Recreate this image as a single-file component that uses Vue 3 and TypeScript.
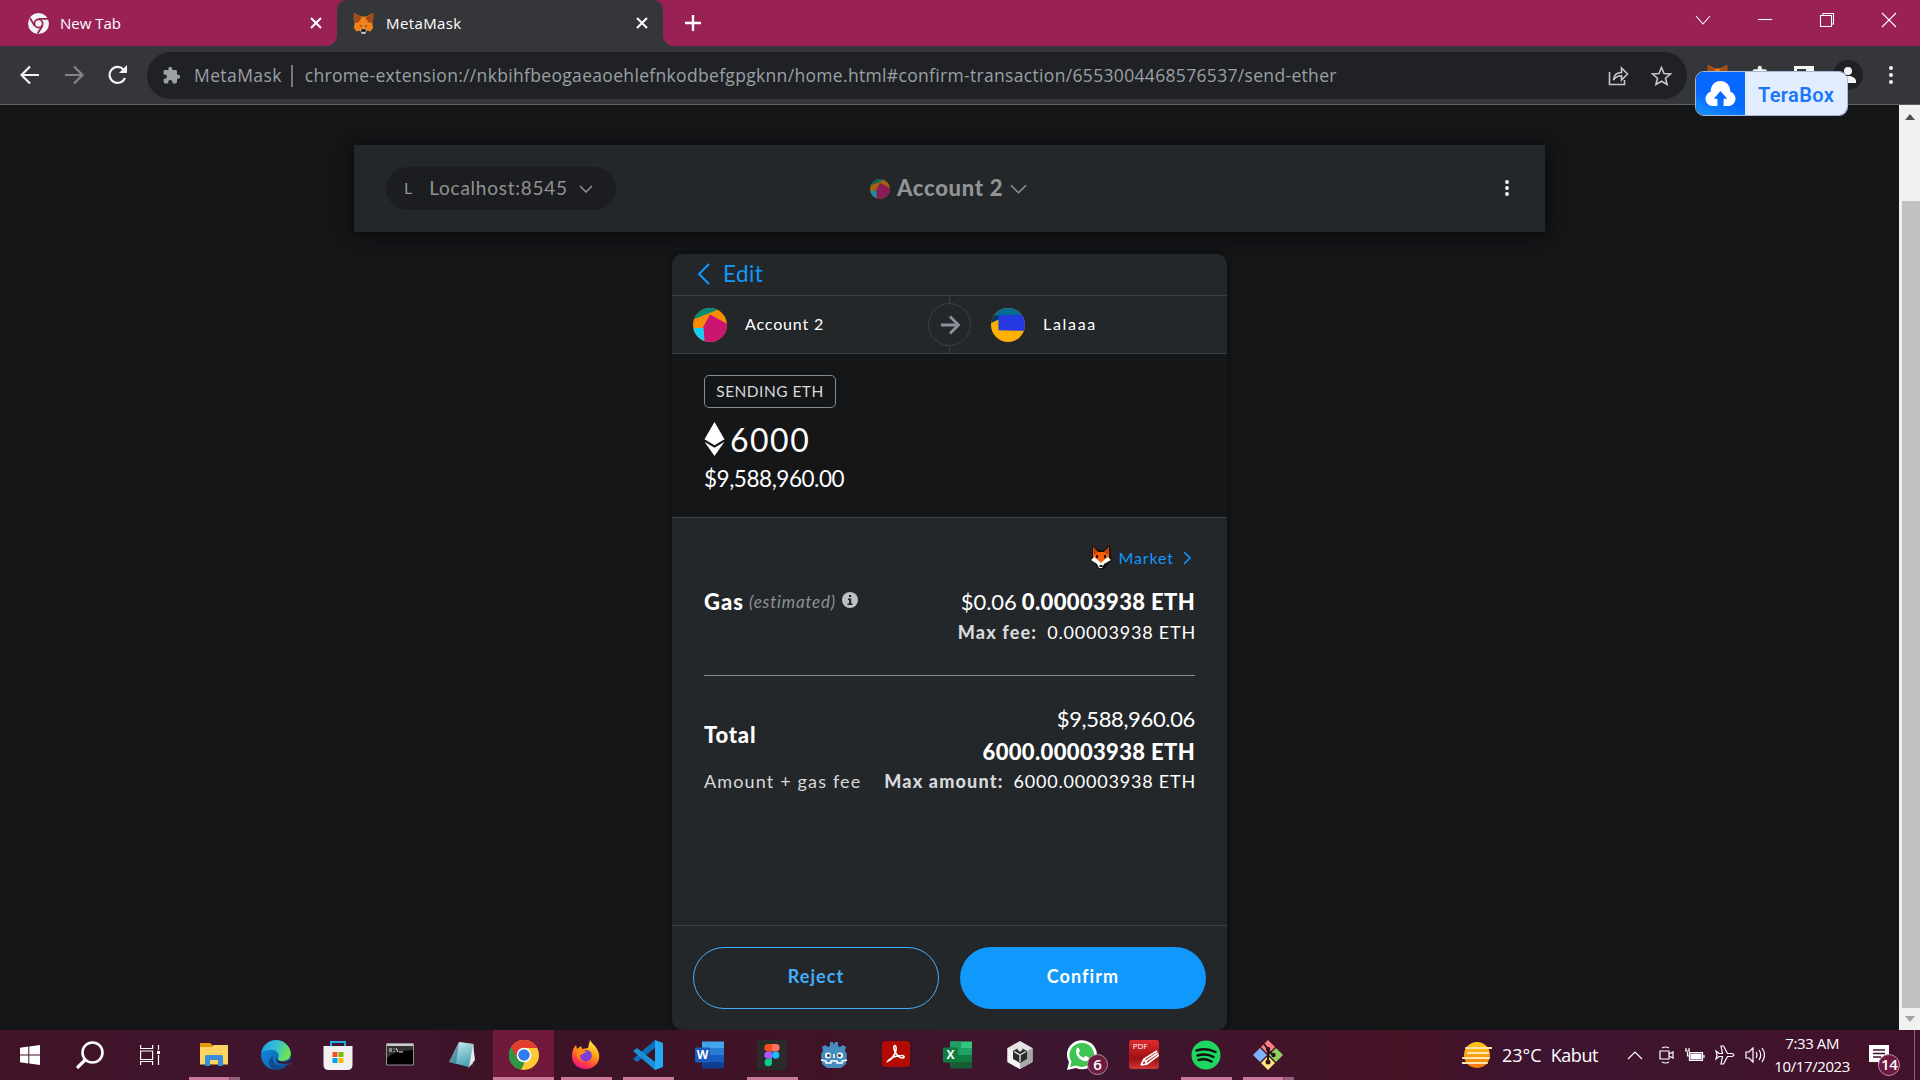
<script setup lang="ts">
interface TaskItem { name: string; state?: 'open' | 'multi' | 'active'; badge?: string }

const tasks: TaskItem[] = [
  { name: 'explorer', state: 'multi' }, { name: 'edge' }, { name: 'store' }, { name: 'cmd' }, { name: 'notepad' },
  { name: 'chrome', state: 'active' }, { name: 'firefox', state: 'open' }, { name: 'vscode', state: 'open' },
  { name: 'word' }, { name: 'figma', state: 'open' }, { name: 'godot' }, { name: 'acrobat' }, { name: 'excel' },
  { name: 'unity' }, { name: 'whatsapp', badge: '6' }, { name: 'pdf' }, { name: 'spotify', state: 'open' },
  { name: 'git', state: 'multi' },
]
</script>

<template>
  <div class="screen">
    <svg class="defs" width="0" height="0" aria-hidden="true">
      <defs>
        <symbol id="fox" viewBox="0 0 24 24">
          <path d="M1 0l8 4h6l8-4v7l-1 4 1 6-3 4-5-1-2 3h-2l-2-3-5 1-3-4 1-6-1-4z" fill="#ee7f1d" />
          <path d="M1 0l9 5-4 6-4 0L.500 6zM23 0l-9 5 4 6 4 0L23.500 6z" fill="#a04c18" />
          <path d="M2 12l4-1h12l4 1-1 3H3z" fill="#f6851b" />
          <path d="M7 13.500l3 1v1.700zM17 13.500l-3 1v1.700z" fill="#33302e" />
          <path d="M8 19l2-1h4l2 1-2 5h-4z" fill="#cdbdb0" /><path d="M9.500 18.500h5v3h-5z" fill="#161616" />
        </symbol>
        <symbol id="jazz" viewBox="0 0 32 32">
          <g clip-path="url(#disc)">
            <path d="M0 0h32v32H0z" fill="#f58c03" /><path d="M0 0h24L22 2 2 10 0 9z" fill="#018e77" />
            <path d="M16 6l18 10v18H11L9 19z" fill="#cb1571" /><path d="M0 19l10-.5L11 33H0z" fill="#18cdf2" />
          </g>
        </symbol>
        <symbol id="puzzle" viewBox="0 0 24 24"><path d="M20.500 11H19V7c0-1.100-.9-2-2-2h-4V3.500a2.500 2.500 0 0 0-5 0V5H4c-1.100 0-2 .9-2 2v3.800h1.500a2.700 2.700 0 0 1 0 5.400H2V20c0 1.100.9 2 2 2h3.800v-1.500a2.700 2.700 0 0 1 5.400 0V22H17c1.100 0 2-.9 2-2v-4h1.500a2.500 2.500 0 0 0 0-5z" /></symbol>
        <clipPath id="disc"><circle cx="16" cy="16" r="16" /></clipPath>
        <clipPath id="mid"><circle cx="15" cy="15" r="15" /></clipPath>
        <linearGradient id="edgeA" x1="0" y1="0" x2="1" y2=".3"><stop stop-color="#1d9be3" /><stop offset=".55" stop-color="#35c1d6" /><stop offset="1" stop-color="#6be552" /></linearGradient>
        <linearGradient id="edgeB" x1="0" y1="0" x2="1" y2="1"><stop stop-color="#0f8fe0" /><stop offset="1" stop-color="#0c59a4" /></linearGradient>
        <linearGradient id="fire" x1=".8" y1="0" x2=".3" y2="1"><stop stop-color="#fff44f" /><stop offset=".45" stop-color="#ff980e" /><stop offset=".8" stop-color="#ff3750" /><stop offset="1" stop-color="#e31587" /></linearGradient>
        <linearGradient id="note" x1="0" y1="0" x2=".5" y2="1"><stop stop-color="#dff3f6" /><stop offset="1" stop-color="#4aa6b8" /></linearGradient>
        <linearGradient id="red" x1="0" y1="0" x2="0" y2="1"><stop stop-color="#e02a2f" /><stop offset=".65" stop-color="#9c0f10" /><stop offset="1" stop-color="#d23a36" /></linearGradient>
        <linearGradient id="sun" x1="0" y1="0" x2="0" y2="1"><stop stop-color="#ffcb1b" /><stop offset="1" stop-color="#f4780e" /></linearGradient>
      </defs>
    </svg>

    <header class="tabs">
      <div class="tab first">
        <svg class="tabicon" viewBox="0 0 24 24"><circle cx="12" cy="12" r="12" fill="#f1f3f4" /><circle cx="12" cy="12" r="4.700" fill="none" stroke="#992153" stroke-width="2" /><path d="M12 6.800h11M7.500 14.500L2.200 5.700M16.500 14.500L11 23.500" stroke="#992153" stroke-width="2" /></svg>
        <span class="t tabname">New Tab</span>
        <svg class="x" viewBox="0 0 12 12"><path d="M1 1l10 10M11 1L1 11" /></svg>
      </div>
      <div class="tab current">
        <svg class="tabicon"><use href="#fox" /></svg>
        <span class="t tabname wide">MetaMask</span>
        <svg class="x" viewBox="0 0 12 12"><path d="M1 1l10 10M11 1L1 11" /></svg>
      </div>
      <svg class="plus" viewBox="0 0 18 18"><path d="M9 1v16M1 9h16" /></svg>
      <div class="winbtns">
        <svg viewBox="0 0 16 16"><path d="M1 4l7 8 7-8" /></svg>
        <svg viewBox="0 0 16 16"><path d="M1 7.500h14" /></svg>
        <svg viewBox="0 0 16 16"><path d="M1.500 3.500h11v11h-11zM4 3.500v-2h10.500V12H13" /></svg>
        <svg viewBox="0 0 16 16"><path d="M1 1l14 14M15 1L1 15" /></svg>
      </div>
    </header>

    <div class="toolbar">
      <svg class="nav" viewBox="0 0 20 20"><path d="M19 10H2M10 1.500L1.500 10l8.500 8.500" /></svg>
      <svg class="nav dim" viewBox="0 0 20 20"><path d="M1 10h17M10 1.500l8.500 8.500-8.500 8.500" /></svg>
      <svg class="nav" viewBox="0 0 20 20"><path d="M17 13a8 8 0 1 1-1.500-8.500L18 7" /><path d="M19 0v8h-8z" fill="#f1f3f4" stroke="none" /></svg>
      <div class="omni">
        <svg class="ext"><use href="#puzzle" /></svg>
        <span class="t site">MetaMask</span><i class="bar"></i>
        <span class="t url">chrome-extension://nkbihfbeogaeaoehlefnkodbefgpgknn/home.html#confirm-transaction/6553004468576537/send-ether</span>
        <svg class="share" viewBox="0 0 20 20"><path d="M1 6v12.500h15V14M5 14c.4-5 3-7.500 8-7.500V2l6 6-6 6V9.800c-4 0-6 1-8 4.200z" /></svg>
        <svg class="star" viewBox="0 0 20 20"><path d="M10 1.500l2.500 6 6.500.5-5 4.200 1.600 6.300L10 15.200l-5.600 3.300L6 12.200 1 8l6.500-.5z" /></svg>
      </div>
      <div class="exts">
        <svg class="e-fox"><use href="#fox" /></svg>
        <svg class="e-puz"><use href="#puzzle" /></svg>
        <svg class="e-side" viewBox="0 0 20 18"><path d="M1.500 1.500h17v15h-17z" fill="none" stroke="#f1f3f4" stroke-width="3" /><path d="M12 2h7v14h-7z" /></svg>
        <svg class="e-user" viewBox="0 0 30 30"><circle cx="15" cy="15" r="15" fill="#202124" /><circle cx="15" cy="11" r="4" /><path d="M7 23v-2c0-3 4-5 8-5s8 2 8 5v2z" /></svg>
        <svg class="e-dots" viewBox="0 0 4 18"><circle cx="2" cy="2" r="2" /><circle cx="2" cy="9" r="2" /><circle cx="2" cy="16" r="2" /></svg>
      </div>
    </div>

    <div class="tera">
      <div class="cloud"><svg viewBox="0 0 30 24"><path d="M7 24a7 7 0 0 1-1.500-13.700C5.500 4 9.500 0 15 0s9.500 4 9.500 10.300A7 7 0 0 1 23 24h-5v-7h3.500L15 9.500 8.500 17H12v7z" fill="#fff" /></svg></div>
      <div class="teraname"><span class="t">TeraBox</span></div>
    </div>

    <main class="page">
      <div class="view">
        <div class="appbar">
          <div class="network"><span class="t netL">L</span><span class="t netname">Localhost:8545</span><svg viewBox="0 0 14 8"><path d="M1 1l6 6 6-6" /></svg></div>
          <div class="account"><svg class="jz"><use href="#jazz" /></svg><span class="t accname">Account 2</span><svg class="chev" viewBox="0 0 18 10"><path d="M1 1l8 8 8-8" /></svg></div>
          <svg class="dots" viewBox="0 0 4 16"><circle cx="2" cy="2" r="1.900" /><circle cx="2" cy="8" r="1.900" /><circle cx="2" cy="14" r="1.900" /></svg>
        </div>

        <section class="card">
          <div class="edit"><svg viewBox="0 0 13 22"><path d="M12 1L2 11l10 10" /></svg><span class="t">Edit</span></div>
          <div class="parties">
            <div class="party"><svg><use href="#jazz" /></svg><span class="t p1">Account 2</span></div>
            <div class="arrow"><svg viewBox="0 0 20 20"><path d="M1 10h17M10 1.500l8.500 8.500-8.500 8.500" /></svg></div>
            <div class="party to"><svg viewBox="0 0 32 32"><g clip-path="url(#disc)"><path d="M0 0h32v32H0z" fill="#fcb002" /><path d="M0 0h32v8H0z" fill="#016b92" /><path d="M0 7h9v3L0 14z" fill="#06395c" /><path d="M7 7l25-.5v15L7 21z" fill="#2437e1" /></g></svg><span class="t p2">Lalaaa</span></div>
          </div>
          <div class="amount">
            <div class="chip"><span class="t">SENDING ETH</span></div>
            <div class="eth"><svg viewBox="0 0 20 34"><path d="M10 0l10 17.300-10 6-10-6zM0 19.800l10 6 10-6L10 34z" /></svg><span class="t ethval">6000</span></div>
            <div class="fiat"><span class="t fiatval">$9,588,960.00</span></div>
          </div>
          <div class="details">
            <div class="market">
              <svg class="mfox" viewBox="0 0 24 26"><path d="M3 1l6 5h6l6-5 1 11 2 4-5 4-4 5h-5l-4-5-5-4 2-4z" fill="#14110f" /><path d="M4 3l5 5h6l5-5v10l-8 8-8-8z" fill="#f7600b" /><path d="M4 3l5 5-4 3zM20 3l-5 5 4 3z" fill="#c93d07" /><path d="M2 16l3-3 5 4 2 2 2-2 5-4 3 3-7 4-2 4h-3l-2-4z" fill="#fff" /><path d="M8 11v3M16 11v3" stroke="#111" stroke-width="2" /><path d="M10.500 21h3v2h-3z" fill="#111" /></svg>
              <span class="t mk">Market</span><svg class="mchev" viewBox="0 0 9 14"><path d="M1 1l6 6-6 6" /></svg>
            </div>
            <div class="line gas">
              <b class="t gasname">Gas</b><i class="t est">(estimated)</i>
              <svg class="info" viewBox="0 0 16 16"><circle cx="8" cy="8" r="8" /><path d="M7 3h2.200v2H7zM6 6.500h3.200v5H10.500V13h-5v-1.500H7V8H6z" fill="#24272a" /></svg>
              <span class="t big usd">$0.06</span><b class="t big heavy">0.00003938 ETH</b>
            </div>
            <div class="line max"><b class="t mlabel">Max fee:</b><span class="t mval">0.00003938 ETH</span></div>
            <div class="rule"></div>
            <div class="total">
              <b class="t totalname">Total</b>
              <div class="sums"><span class="t big sum">$9,588,960.06</span><b class="t big heavy">6000.00003938 ETH</b></div>
            </div>
            <div class="line max last"><span class="t agf">Amount + gas fee</span><b class="t mlabel">Max amount:</b><span class="t mval">6000.00003938 ETH</span></div>
          </div>
          <div class="actions"><button class="reject">Reject</button><button class="confirm">Confirm</button></div>
        </section>
      </div>
      <div class="scroll"><i class="up"></i><i class="thumb"></i><i class="down"></i></div>
    </main>

    <footer class="taskbar">
      <div class="sys"><svg viewBox="0 0 20 20" width="20" height="20"><path d="M0 2.700l8.300-1.200v8H0zM9.300 1.400L20 0v9.500H9.300zM0 10.500h8.300v8L0 17.300zM9.300 10.500H20V20L9.300 18.600z" fill="#fff" /></svg></div>
      <div class="sys"><svg viewBox="0 0 28 28" width="28" height="28"><circle cx="16.500" cy="11.500" r="10" fill="none" stroke="#fff" stroke-width="2.600" /><path d="M9 19l-8 8" stroke="#fff" stroke-width="3.200" /></svg></div>
      <div class="sys views"><svg viewBox="0 0 20 20" width="20" height="20" fill="none" stroke="#fff" stroke-width="1.200"><path d="M.6 0v3.500h12V0M.6 6h12v8.500H.6zM.6 20v-3.500h12V20M18.500 0v5M18.500 10v10" /><path d="M17 6h3v3h-3z" fill="#fff" stroke="none" /></svg></div>
      <div v-for="item in tasks" :key="item.name" class="task" :class="item.state">
        <svg viewBox="0 0 30 30" width="30" height="30">
          <template v-if="item.name === 'explorer'"><path d="M1 3h10l3 2.500V8H1z" fill="#e09b06" /><path d="M1 7h12l2-2h14v19.500H1z" fill="#fdd462" /><path d="M6 26v-9.500q0-1.500 1.500-1.500h15q1.500 0 1.500 1.500V26h-5v-6h-8v6z" fill="#3a8ddb" /></template>
          <template v-else-if="item.name === 'edge'"><g clip-path="url(#mid)"><path d="M0 0h30v30H0z" fill="url(#edgeB)" /><path d="M0 14C1 5 8 0 15 0c9 0 15 6 15 13 0 5-4 8-9 8-4 0-5-1-4-3 3-5-3-9-8-8-4 0-8 1-9 4z" fill="url(#edgeA)" /><path d="M12 16c-2 8 6 12 15 8-3 5-9 6-13 6-6-2-9-9-2-14z" fill="#114a8b" /></g><path d="M17 17c-2 3 2 5 6 5l8-2v4l-3 .5c-4 .5-7 1-10-1-4-2-4-6-1-6.500z" fill="#0d57a0" /><path d="M17 18c-1 3 4 4.500 8 3.500l6-2-2 4-3 0c-6 1-12-1-9-5.500z" fill="#41142d" /></template>
          <template v-else-if="item.name === 'store'"><path d="M8 6V2h14v4" fill="none" stroke="#25a9e8" stroke-width="2" /><path d="M.5 6h29v19q0 5-5 5h-19q-5 0-5-5z" fill="#f1f1f1" /><path d="M9.500 12h5v5h-5z" fill="#f25022" /><path d="M15.500 12h5v5h-5z" fill="#7fba00" /><path d="M9.500 18h5v5h-5z" fill="#00a4ef" /><path d="M15.500 18h5v5h-5z" fill="#ffb900" /></template>
          <template v-else-if="item.name === 'cmd'"><path d="M1.500 3.500h27v21.500h-27z" fill="#000" stroke="#8e9296" /><path d="M2 4h26v2H2z" fill="#c9cdd1" /><path d="M2 6h26v4C15 11 7 13 2 18z" fill="#333" /><path d="M4 9h3M4 11h3M9 8.500v1M9 11v1M11 8l2 4M14 12h4" stroke="#ddd" /></template>
          <template v-else-if="item.name === 'notepad'"><path d="M13 2l14 2-1 20-5 4z" fill="#9a8c6c" /><path d="M12 2l14 2-4 23-20-5z" fill="url(#note)" /><path d="M26 4l2 16-6 7z" fill="#e3edef" /><path d="M2 22L12 3 9 24z" fill="#2d7587" opacity=".6" /></template>
          <template v-else-if="item.name === 'chrome'"><g clip-path="url(#mid)"><path d="M0 0h30v30H0z" fill="#fcc934" /><path d="M0 0l9 19 6 3-3 8H0z" fill="#2c9644" /><path d="M8.500 19l7 4-4 7H0z" fill="#2c9644" /><path d="M0 8L6 0h20l4 8H15l-7 11L2 7z" fill="#e33b2e" /><path d="M2 7l6.500 12L13 22l-3 8H0V8z" fill="#2c9644" /></g><circle cx="15" cy="15" r="7.300" fill="#fff" /><circle cx="15" cy="15" r="5.800" fill="#2f7cf0" /></template>
          <template v-else-if="item.name === 'firefox'"><path d="M19 0c2 4 5 5 7 9 6 10-1 20-11 20C6 29 1 23 1 16c0-4 1-8 4-11l1 4 4-3 1 3 6-1z" fill="url(#fire)" /><circle cx="15" cy="15.500" r="5.800" fill="#7a3ed8" /><path d="M6 9q5-2 10 3c-4 0-3 3-7 3-2 3 1 6 4 7-5 0-8-5-7-13z" fill="#ff8a16" /></template>
          <template v-else-if="item.name === 'vscode'"><path d="M22 0l8 3v24l-8 3z" fill="#24a9f3" /><path d="M22 0v8L4 22l-4-3z" fill="#0a6fb5" /><path d="M22 30v-8L4 8l-4 3z" fill="#1a8fd9" /></template>
          <template v-else-if="item.name === 'word' || item.name === 'excel'">
            <g v-if="item.name === 'word'"><path d="M7 1.500h22V8H7z" fill="#41a5ee" /><path d="M7 8h22v7H7z" fill="#2b7cd3" /><path d="M7 15h22v7H7z" fill="#185abd" /><path d="M7 22h22v6.500H7z" fill="#103f91" /><rect y="7.500" width="15" height="15" rx="1" fill="#185abd" /></g>
            <g v-else><path d="M7 1.500h22V8H7z" fill="#33c481" /><path d="M7 8h22v7H7z" fill="#21a366" /><path d="M7 15h22v7H7z" fill="#107c41" /><path d="M7 22h22v6.500H7z" fill="#185c37" /><path d="M7 1.500h11V15H7z" fill="#1f9f63" /><rect y="7.500" width="15" height="15" rx="1" fill="#107c41" /></g>
            <text x="7.500" y="19.300" class="office">{{ item.name === 'word' ? 'W' : 'X' }}</text>
          </template>
          <template v-else-if="item.name === 'figma'"><path d="M0 0h30v30H0z" fill="#2a2a2a" /><path d="M15 4h-4a3.700 3.700 0 0 0 0 7.400h4z" fill="#f24e1e" /><path d="M15 4h4a3.700 3.700 0 0 1 0 7.400h-4z" fill="#ff7262" /><path d="M15 11.400h-4a3.700 3.700 0 0 0 0 7.400h4z" fill="#a259ff" /><circle cx="18.700" cy="15.100" r="3.700" fill="#1abcfe" /><path d="M15 18.800h-4a3.700 3.700 0 1 0 4 3.700z" fill="#0acf83" /></template>
          <template v-else-if="item.name === 'godot'"><path d="M3 7l3-2 3 2 2-1V2h3l1 3 1-3h3v4l2 1 3-2 3 2-1 4 2 3-1 10-5 4H8l-5-4-1-10 2-3z" fill="#478cbf" /><circle cx="9" cy="15.500" r="3" fill="#fff" /><circle cx="21" cy="15.500" r="3" fill="#fff" /><circle cx="9.500" cy="15.500" r="1.600" fill="#414042" /><circle cx="20.500" cy="15.500" r="1.600" fill="#414042" /><path d="M15 14v4M2 20l5 1v2h5v-2h6v2h5v-2l5-1" fill="none" stroke="#fff" stroke-width="1.500" /></template>
          <template v-else-if="item.name === 'acrobat'"><rect x="1" y="1" width="28" height="26" rx="4" fill="#b30b00" /><path d="M7 21c5-2 9-10 8-14-1-3-3-1-2 2 1 4 5 9 8 9 3 0 3-3-1-2.500C15 16 9 18 7 21z" fill="none" stroke="#fff" stroke-width="1.600" /></template>
          <template v-else-if="item.name === 'unity'"><path d="M15 1l12.500 7v14L15 29 2.500 22V8z" fill="#e4e4e4" /><path d="M15 15v14L2.500 22V8z" fill="#f4f4f4" /><path d="M15 15l12.500-7v14L15 29z" fill="#a9a9a9" /><path d="M15 7l7 4v8l-7 4-7-4v-8z" fill="#2b2b2b" /><path d="M15 15v7M15 15l-6-3.500M15 15l6-3.500" stroke="#ddd" stroke-width="1.400" fill="none" /><path d="M15 5l3 4-3 3-3-3z" fill="#e4e4e4" /></template>
          <template v-else-if="item.name === 'whatsapp'"><path d="M0 30l2-8A15 14.500 0 1 1 9 28z" fill="#fff" /><path d="M3 27l1.500-5.500A12.300 12 0 1 1 9 25.500z" fill="#3fc351" /><path d="M10 8c2-1 2 0 3 3l-1.500 2c1 2.500 3 4 5 4.700l2-2 3.500 2c0 4-4 4-7 2.500-4-2-8-7-5-12.200z" fill="#fff" /></template>
          <template v-else-if="item.name === 'pdf'"><rect width="30" height="29" rx="3" fill="url(#red)" /><text x="11" y="9" class="pdftext">PDF</text><path d="M12 25l3-6 13-8M12 25l6-1 12-9M15 19l3 5M17 21l12-8" stroke="#fff" stroke-width="1.700" fill="none" /></template>
          <template v-else-if="item.name === 'spotify'"><circle cx="15" cy="15" r="14.500" fill="#1ed760" /><path d="M5.500 10.500q10-3 19 1.500M6.500 15.500q9-2.500 16 1.500M7.500 20q7-2 13 1.500" fill="none" stroke="#101010" stroke-width="2.500" stroke-linecap="round" /></template>
          <template v-else><path d="M15 0l7 7-7 7-7-7z" fill="#ff8080" /><path d="M7 8l7 7-7 7-7-7z" fill="#80b3ff" /><path d="M23 8l7 7-7 7-7-7z" fill="#8dd35f" /><path d="M15 16l7 7-7 7-7-7z" fill="#ffe680" /><path d="M11 4l4 5v13M15 10l5 5" stroke="#2b1717" stroke-width="2" fill="none" /><circle cx="15" cy="9" r="2.200" fill="#2b1717" /><circle cx="15" cy="22" r="2.500" fill="#2b1717" /><circle cx="20.500" cy="15" r="2.200" fill="#2b1717" /></template>
        </svg>
        <span v-if="item.badge" class="badge">{{ item.badge }}</span>
      </div>
      <div class="tray">
        <svg class="wx" viewBox="0 0 30 26"><circle cx="15" cy="13" r="13" fill="url(#sun)" /><path d="M4 6h26M6 11h20M1 16h26M0 21h25" stroke="#fde7b0" stroke-width="2" stroke-linecap="round" /></svg>
        <span class="t">23°C</span><span class="t cond">Kabut</span>
        <svg class="ti up2" viewBox="0 0 16 9"><path d="M1 8l7-7 7 7" /></svg>
        <svg class="ti meet" viewBox="0 0 15 18"><path d="M1 5h9v8H1zM10 8l4-2v6l-4-2M3 2q3.500-2 7 0M3 16q3.500 2 7 0" /></svg>
        <svg class="ti batt" viewBox="0 0 20 14"><path d="M4.500 4.500h13v8h-13zM19 7v3M0 3h5M1 0v3M4 0v3M2.500 4v4h2" /><path d="M6 6h10v5H6z" fill="#fff" /></svg>
        <svg class="ti plane" viewBox="0 0 20 20"><path d="M1 6l3 2.500h3.500L6 1h2.500l4 7.500H17q4 1.500 0 3h-4.500l-4 7.500H6l1.500-7.500H4L1 14l1-4z" /></svg>
        <svg class="ti spk" viewBox="0 0 20 18"><path d="M1 6h3l4-4v14l-4-4H1zM11 6q2 3 0 6M14 4q3.500 5 0 10M17 2q5 7 0 14" /></svg>
        <div class="clock"><span class="t">7:33 AM</span><span class="t">10/17/2023</span></div>
        <div class="notif"><svg viewBox="0 0 20 20"><path d="M0 0h20v17h-8l-3 3v-3H0z" fill="#fff" /><path d="M4 5h12M4 8.500h12M4 12h8" stroke="#41142d" stroke-width="1.300" /></svg><span class="badge b14">14</span></div>
        <i class="peek"></i>
      </div>
    </footer>
  </div>
</template>

<style>
body { margin: 0; background: #141618; overflow: hidden; }
</style>

<style scoped>
.screen { width: 1920px; height: 1080px; display: flex; flex-direction: column; overflow: hidden; position: relative; font-family: Lato, sans-serif; color: #fff; }
.screen *, .screen { box-sizing: border-box; }
.defs { position: absolute; }
svg { display: block; flex: none; }
.t { white-space: nowrap; flex: none; }

.tabs { height: 46px; flex: none; background: #992153; display: flex; align-items: center; }
.tab { display: flex; align-items: center; height: 46px; }
.first { width: 337px; padding-left: 28px; }
.current { width: 326px; padding-left: 16px; background: #35363a; border-radius: 10px 10px 0 0; position: relative; }
.current::before, .current::after { content: ""; position: absolute; bottom: 0; width: 10px; height: 10px; }
.current::before { left: -10px; background: radial-gradient(circle at 0 0, transparent 9.500px, #35363a 10px); }
.current::after { right: -10px; background: radial-gradient(circle at 100% 0, transparent 9.500px, #35363a 10px); }
.tabicon { width: 21px; height: 21px; }
.tabname { font: 15px "Open Sans", sans-serif; margin-left: 11px; }
.tabname.wide { letter-spacing: .4px; margin-left: 12px; }
.x { width: 12px; height: 12px; margin-left: auto; margin-right: 15px; fill: none; stroke: #fff; stroke-width: 2; }
.plus { width: 18px; height: 18px; margin-left: 21px; fill: none; stroke: #fff; stroke-width: 2.400; }
.winbtns { display: flex; margin-left: auto; margin-right: 23px; gap: 46px; margin-bottom: 6px; }
.winbtns svg { width: 16px; height: 16px; fill: none; stroke: #fff; stroke-width: 1.100; }

.toolbar { height: 59px; flex: none; background: #35363a; border-bottom: 1px solid #606165; display: flex; align-items: center; padding: 0 0 0 20px; }
.nav { width: 20px; height: 20px; margin-right: 24px; fill: none; stroke: #f1f3f4; stroke-width: 2.200; }
.nav.dim { opacity: .42; }
.nav:nth-child(3) { margin-right: 19px; }
.omni { width: 1540px; height: 47px; border-radius: 24px; background: #202124; display: flex; align-items: center; color: #9aa0a6; font: 17.500px "Open Sans", sans-serif; padding-left: 15px; margin-top: 1px; }
.omni .t { padding-bottom: 1px; }
.ext { width: 19px; height: 19px; fill: #9aa0a6; margin-right: 13px; }
.site { letter-spacing: .4px; }
.url { letter-spacing: .325px; }
.bar { width: 2px; height: 22px; background: #77797d; margin: 0 12px 0 9px; }
.share, .star { width: 21px; height: 20px; fill: none; stroke: #c4c6c9; stroke-width: 1.600; }
.share { margin-left: auto; }
.star { margin: 0 15px 0 22px; }
.exts { display: flex; align-items: center; fill: #f1f3f4; }
.e-fox { width: 23px; height: 21px; margin-left: 19px; }
.e-puz { width: 20px; height: 20px; margin-left: 22px; }
.e-side { width: 20px; height: 18px; margin-left: 23px; }
.e-user { width: 30px; height: 30px; margin-left: 19px; }
.e-dots { width: 4px; height: 18px; margin-left: 26px; }
.tera { position: absolute; left: 1695px; top: 71px; width: 153px; height: 45px; border-radius: 9px; overflow: hidden; display: flex; border: 1px solid #a9b9d2; z-index: 2; }
.cloud { width: 49px; background: linear-gradient(20deg, #1796ff, #0668ff 40%); display: flex; align-items: center; padding-left: 9px; }
.cloud svg { width: 31px; height: 25px; }
.teraname { flex: 1; background: #e2eeff; display: flex; align-items: center; padding: 2px 0 0 13px; color: #1b76fb; font: 600 20px Roboto, sans-serif; letter-spacing: .35px; }

.page { flex: 1; min-height: 0; display: flex; background: #141618; }
.view { flex: 1; display: flex; flex-direction: column; align-items: center; padding-top: 40px; }
.appbar { width: 1191px; height: 87px; flex: none; background: #24272a; box-shadow: 0 2px 16px #060708; display: flex; align-items: center; padding: 0 36px 0 32px; color: #929394; }
.appbar .t, .edit .t, .party .t { padding-bottom: 2px; }
.network { width: 230px; height: 43px; border-radius: 22px; background: #1c1d20; display: flex; align-items: center; padding-left: 18px; }
.network svg { width: 14px; height: 8px; margin-left: 11px; fill: none; stroke: #929394; stroke-width: 1.500; }
.netL { font-size: 16px; margin-right: 17px; }
.netname { font-size: 19px; letter-spacing: .75px; }
.account { display: flex; align-items: center; margin-left: 254px; }
.jz { width: 20px; height: 20px; opacity: .6; margin-right: 7px; }
.accname { font-weight: 900; font-size: 22px; letter-spacing: .7px; }
.chev { width: 17px; height: 10px; margin-left: 7px; fill: none; stroke: #929394; stroke-width: 1.600; }
.dots { width: 4px; height: 16px; fill: #fff; margin: 0 0 1px auto; }
.card { width: 555px; height: 776px; margin-top: 22px; flex: none; border-radius: 10px; background: #24272a; overflow: hidden; display: flex; flex-direction: column; box-shadow: 0 0 7px #0b0c0d; }
.edit { height: 42px; border-bottom: 1px solid #3b4046; display: flex; align-items: center; padding-left: 25px; color: #1098fc; font-size: 22.500px; letter-spacing: .4px; }
.edit svg { width: 13px; height: 22px; margin-right: 13px; margin-bottom: 1px; fill: none; stroke: #1098fc; stroke-width: 2; }
.parties { height: 58px; border-bottom: 1px solid #3b4046; display: flex; align-items: center; background: linear-gradient(#3b4046, #3b4046) 277px 0/1px 100% no-repeat; font-size: 16px; }
.party { display: flex; align-items: center; width: 256px; padding-left: 21px; }
.party.to { padding-left: 20px; }
.party svg { width: 34px; height: 34px; margin-right: 18px; }
.p1 { letter-spacing: .85px; }
.p2 { letter-spacing: 1.700px; }
.arrow { width: 43px; height: 43px; border: 1px solid #3b4046; border-radius: 50%; background: #24272a; display: grid; place-items: center; flex: none; }
.arrow svg { width: 20px; height: 20px; fill: none; stroke: #8a9199; stroke-width: 2.800; }
.amount { height: 164px; background: #141618; border-bottom: 1px solid #3b4046; padding: 21px 32px 0; display: flex; flex-direction: column; align-items: flex-start; }
.chip { width: 132px; height: 33px; border: 1px solid #848c96; border-radius: 5px; display: grid; place-items: center; color: #d6d9dc; font-size: 15.500px; letter-spacing: .45px; padding-bottom: 2px; }
.eth { display: flex; align-items: center; margin-top: 12px; height: 38px; font-size: 32px; }
.eth svg { width: 21px; height: 34px; fill: #fff; margin-right: 5px; }
.ethval { letter-spacing: 1.500px; }
.fiat { font-size: 22.500px; height: 40px; display: flex; align-items: center; letter-spacing: -.45px; }
.details { height: 407px; padding: 26px 32px 0; }
.market { height: 28px; display: flex; align-items: center; justify-content: flex-end; color: #1098fc; font-size: 16px; padding-right: 3px; }
.mk { letter-spacing: .9px; padding-bottom: 1px; }
.mfox { width: 24px; height: 26px; margin-right: 5px; margin-bottom: 2px; }
.mchev { width: 9px; height: 14px; margin-left: 9px; fill: none; stroke: #1098fc; stroke-width: 1.600; }
.line { display: flex; align-items: center; }
.gas { height: 34px; margin-top: 12px; }
.gasname, .totalname { font-size: 22px; font-weight: 900; letter-spacing: 1px; }
.est { font-size: 17px; letter-spacing: .8px; color: #8b9096; margin-left: 5px; }
.info { width: 16px; height: 16px; fill: #bbc0c5; margin: 0 0 2px 6px; }
.big { font-size: 22px; }
.heavy { font-weight: 900; letter-spacing: .35px; }
.usd { margin-left: auto; margin-right: 5px; }
.max { height: 30px; font-size: 18px; padding-bottom: 2px; }
.mlabel { color: #d6d9dc; margin-left: auto; font-weight: 900; letter-spacing: 1.150px; }
.mval { margin-left: 10px; letter-spacing: .8px; margin-right: -1px; }
.rule { height: 1px; background: #848c96; margin-top: 27px; }
.total { display: flex; align-items: center; justify-content: space-between; margin-top: 26px; height: 66px; }
.totalname { padding-bottom: 2px; letter-spacing: .8px; }
.sums { display: flex; flex-direction: column; align-items: flex-end; }
.sums .t { line-height: 33px; }
.sum { letter-spacing: -.35px; }
.last { margin-top: -1px; }
.agf { color: #d6d9dc; letter-spacing: 1.150px; }
.actions { height: 105px; border-top: 1px solid #3b4046; display: flex; justify-content: space-between; padding: 21px 21px 0; }
.actions button { width: 246px; height: 62px; border-radius: 31px; font: 700 18px Lato, sans-serif; letter-spacing: 1.100px; padding: 0 0 4px; }
.reject { background: none; border: 1px solid #43aefc; color: #43aefc; }
.confirm { background: #1098fc; border: 0; color: #fff; }
.scroll { width: 21px; background: #f1f1f1; display: flex; flex-direction: column; align-items: center; }
.up, .down { border: 5.500px solid transparent; flex: none; }
.up { border-bottom: 6px solid #505050; border-top: 0; margin-top: 9px; }
.down { border-top: 6px solid #a3a3a3; border-bottom: 0; margin-top: 8px; }
.thumb { width: 18px; height: 807px; background: #c1c1c1; margin: 81px 0 0 2px; }

.taskbar { height: 50px; flex: none; display: flex; background: linear-gradient(90deg, #401327, #40152f 17%, #3e1327 27%, #401327 42%, #3c1630 56%, #461226 73%, #3d1430 80%, #3f142d 87%, #43122a); }
.sys { width: 60px; display: grid; place-items: center; flex: none; }
.sys.views { width: 63px; padding-right: 3px; }
.task { width: 62px; flex: none; display: grid; place-items: center; position: relative; }
.task.active { background: linear-gradient(#70193d, #70193d) 0 0/61px 100% no-repeat; }
.task.open::after, .task.multi::after, .task.active::after { content: ""; position: absolute; bottom: 0; height: 3px; left: 6px; width: 51px; background: #c97a9c; }
.task.active::after { left: 0; width: 61px; }
.task.multi::after { background: linear-gradient(90deg, #c97a9c 40px, #7e4a64 40px, #965f7c 42px); }
.office { font: 700 12px "Open Sans", sans-serif; fill: #fff; text-anchor: middle; }
.pdftext { font: 8px "Open Sans", sans-serif; fill: #fff; text-anchor: middle; }
.badge { position: absolute; left: 36px; top: 24px; width: 21px; height: 21px; border-radius: 50%; background: #6f1b41; border: 1px solid #b58a9d; font: 600 15px/18px "Open Sans", sans-serif; text-align: center; }
.tray { flex: 1; display: flex; align-items: center; font: 18px "Open Sans", sans-serif; padding-left: 163px; }
.wx { width: 30px; height: 26px; margin-right: 10px; }
.cond { margin-left: 9px; letter-spacing: -.4px; }
.ti { fill: none; stroke: #fff; stroke-width: 1.200; }
.up2 { width: 16px; height: 9px; margin-left: 29px; }
.meet { width: 15px; height: 18px; margin-left: 16px; }
.batt { width: 20px; height: 14px; margin-left: 11px; }
.plane { width: 20px; height: 20px; margin-left: 10px; }
.spk { width: 20px; height: 18px; margin-left: 10px; }
.clock { width: 76px; margin-left: 9px; display: flex; flex-direction: column; align-items: center; font-size: 15px; line-height: 23px; letter-spacing: -.4px; }
.notif { width: 20px; height: 20px; margin-left: 19px; position: relative; }
.notif svg { width: 20px; height: 20px; }
.b14 { left: 9px; top: 9px; width: 22px; height: 22px; letter-spacing: -.5px; }
.peek { width: 1px; height: 50px; background: #8c6a7b; margin-left: 25px; }
</style>
